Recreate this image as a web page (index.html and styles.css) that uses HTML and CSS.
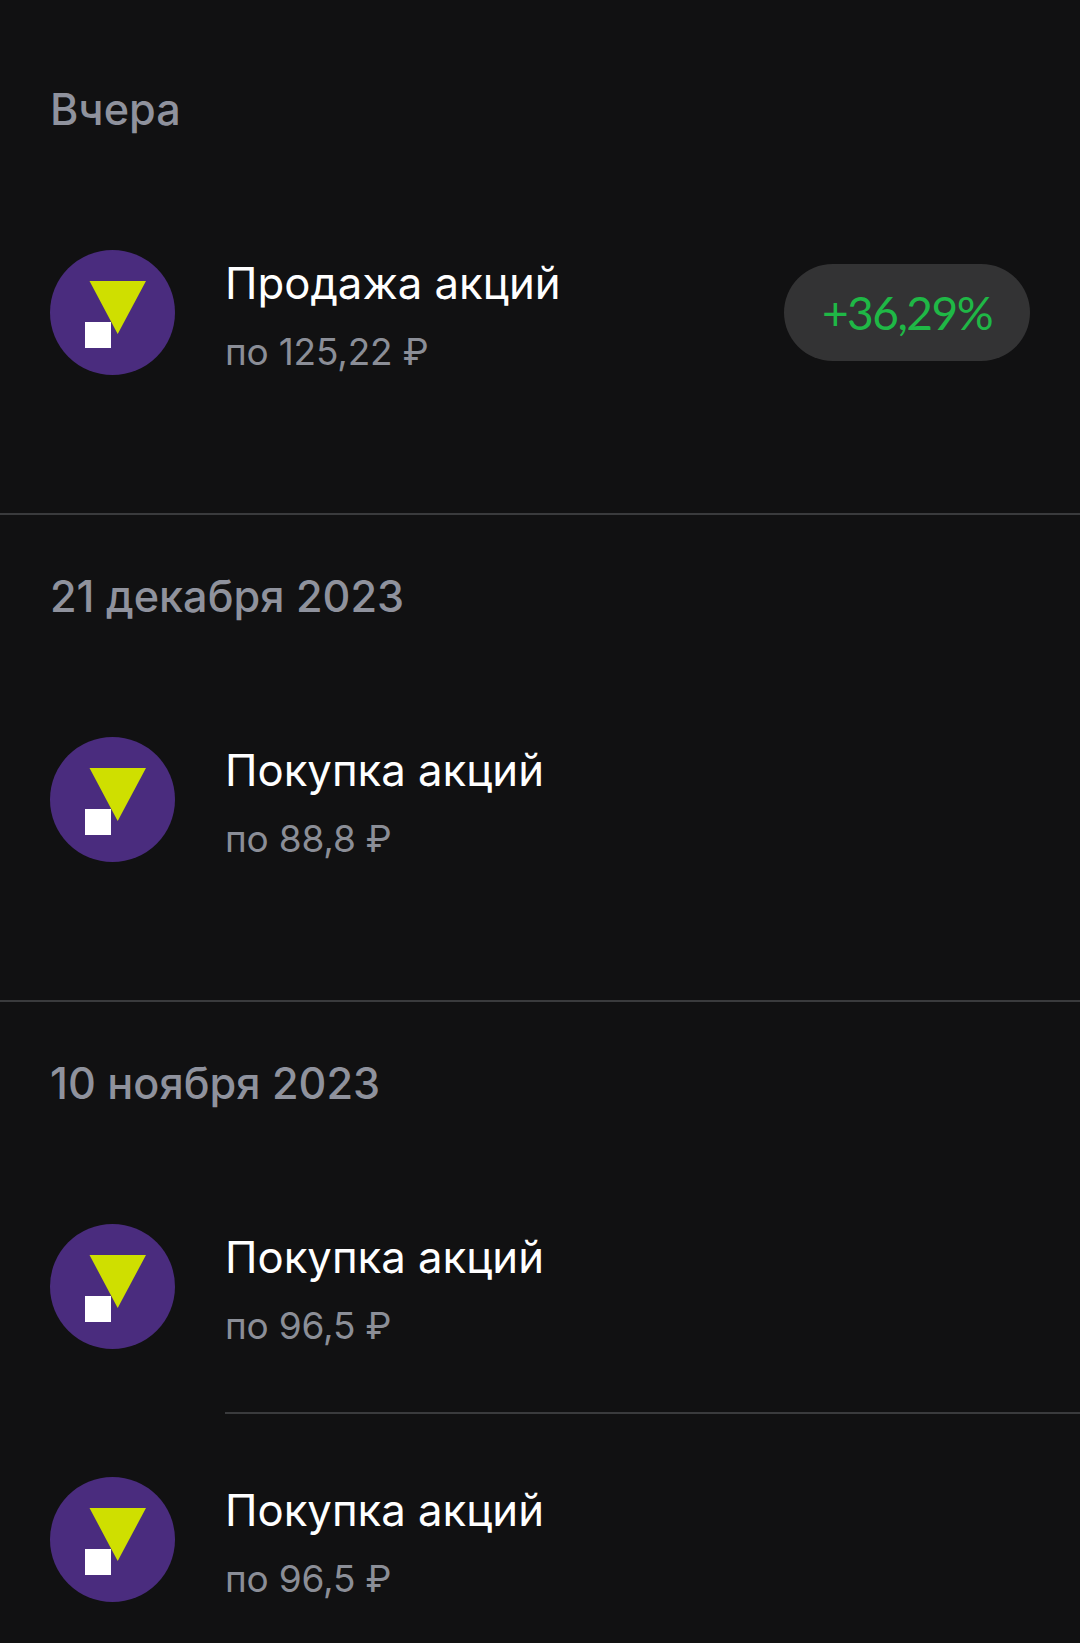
FILE: index.html
```html
<!DOCTYPE html>
<html lang="ru">
<head>
<meta charset="utf-8">
<title>Операции</title>
<link rel="stylesheet" href="styles.css">
</head>
<body>
<main class="feed">
  <section class="group group-first">
    <h2 class="date">Вчера</h2>
    <div class="row">
      <svg class="logo" viewBox="0 0 125 125"><circle cx="62.5" cy="62.5" r="62.5" fill="#4a2c7e"/><polygon points="39.5,31 96,31 67.7,84" fill="#cfdf00"/><rect x="35" y="72" width="26" height="26" fill="#fff"/></svg>
      <div class="info"><div class="title">Продажа акций</div><div class="sub">по 125,22 ₽</div></div>
      <div class="pill">+36,29%</div>
    </div>
  </section>
  <section class="group">
    <h2 class="date">21 декабря 2023</h2>
    <div class="row">
      <svg class="logo" viewBox="0 0 125 125"><circle cx="62.5" cy="62.5" r="62.5" fill="#4a2c7e"/><polygon points="39.5,31 96,31 67.7,84" fill="#cfdf00"/><rect x="35" y="72" width="26" height="26" fill="#fff"/></svg>
      <div class="info"><div class="title">Покупка акций</div><div class="sub">по 88,8 ₽</div></div>
    </div>
  </section>
  <section class="group group-last">
    <h2 class="date">10 ноября 2023</h2>
    <div class="row">
      <svg class="logo" viewBox="0 0 125 125"><circle cx="62.5" cy="62.5" r="62.5" fill="#4a2c7e"/><polygon points="39.5,31 96,31 67.7,84" fill="#cfdf00"/><rect x="35" y="72" width="26" height="26" fill="#fff"/></svg>
      <div class="info"><div class="title">Покупка акций</div><div class="sub">по 96,5 ₽</div></div>
    </div>
    <div class="inset-line"></div>
    <div class="row">
      <svg class="logo" viewBox="0 0 125 125"><circle cx="62.5" cy="62.5" r="62.5" fill="#4a2c7e"/><polygon points="39.5,31 96,31 67.7,84" fill="#cfdf00"/><rect x="35" y="72" width="26" height="26" fill="#fff"/></svg>
      <div class="info"><div class="title">Покупка акций</div><div class="sub">по 96,5 ₽</div></div>
    </div>
  </section>
</main>
</body>
</html>
```
FILE: styles.css
```css
* { box-sizing: border-box; }
html, body { margin: 0; padding: 0; }
body {
  width: 1080px;
  height: 1643px;
  overflow: hidden;
  background: #111112;
  font-family: Inter, Roboto, "Noto Sans", sans-serif;
}
.feed { display: flex; flex-direction: column; }
.group {
  height: 487px;
  padding: 51px 0 0;
  border-bottom: 2px solid #3a3b3d;
}
.group-first { height: 515px; padding-top: 79px; }
.group-last { height: auto; border-bottom: 0; }
.date {
  margin: 0 0 111px 50px;
  height: 60px;
  font-size: 43.2px;
  line-height: 60px;
  font-weight: 500;
  color: #8f929d;
}
.row {
  display: flex;
  align-items: center;
  height: 125px;
  padding: 0 50px;
}
.logo { width: 125px; height: 125px; flex: none; }
.info { margin-left: 50px; padding-top: 5px; flex: 1; }
.title {
  font-size: 43.7px;
  line-height: 58px;
  color: #fff;
}
.sub {
  margin-top: 16px;
  font-size: 37px;
  line-height: 46px;
  letter-spacing: -0.2px;
  color: #8b8e97;
}
.pill {
  width: 246px;
  height: 97px;
  border-radius: 49px;
  background: #333334;
  color: #1fb846;
  font-family: Lato, sans-serif;
  font-size: 46px;
  letter-spacing: -1.5px;
  line-height: 97px;
  text-align: center;
}
.inset-line {
  height: 2px;
  margin: 63px 0 63px 225px;
  background: #3a3b3d;
}
```
